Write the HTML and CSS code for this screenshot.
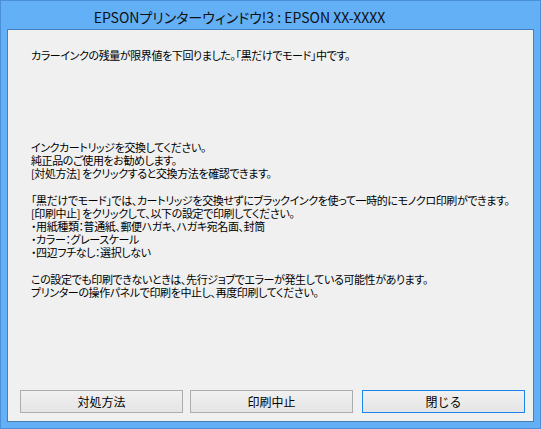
FILE: index.html
```html
<!DOCTYPE html>
<html lang="ja">
<head>
<meta charset="utf-8">
<title>EPSON</title>
<link rel="stylesheet" href="styles.css">
</head>
<body>
<div class="window">
  <div class="titlebar"><span class="title">EPSONプリンターウィンドウ!3 : EPSON XX-XXXX</span></div>
  <div class="client">
    <div class="message">
      <p class="lead">カラーインクの残量が限界値を下回りました。「黒だけでモード」中です。</p>
      <p class="block first">インクカートリッジを交換してください。<br>純正品のご使用をお勧めします。<br>[対処方法] をクリックすると交換方法を確認できます。</p>
      <p class="block">「黒だけでモード」では、カートリッジを交換せずにブラックインクを使って一時的にモノクロ印刷ができます。<br>[印刷中止] をクリックして、以下の設定で印刷してください。<br>・用紙種類：普通紙、郵便ハガキ、ハガキ宛名面、封筒<br>・カラー：グレースケール<br>・四辺フチなし：選択しない</p>
      <p class="block">この設定でも印刷できないときは、先行ジョブでエラーが発生している可能性があります。<br>プリンターの操作パネルで印刷を中止し、再度印刷してください。</p>
    </div>
    <div class="buttons">
      <button class="btn">対処方法</button>
      <button class="btn">印刷中止</button>
      <button class="btn focused">閉じる</button>
    </div>
  </div>
</div>
</body>
</html>
```
FILE: styles.css
```css
* { box-sizing: border-box; }
html, body { margin: 0; padding: 0; }
body {
  width: 541px;
  height: 429px;
  overflow: hidden;
  font-family: "Noto Sans CJK JP", "Noto Sans", sans-serif;
  color: #000;
}
.window {
  width: 541px;
  height: 429px;
  background: #63b0f7;
  border: 1px solid #4a8fd8;
  display: flex;
  flex-direction: column;
}
.titlebar {
  height: 28px;
  display: flex;
  align-items: center;
  justify-content: center;
  padding-right: 62px;
  padding-top: 4px;
}
.title {
  font-size: 14px;
  color: #111;
  font-feature-settings: "palt";
}
.client {
  margin: 0 6px 6px 6px;
  flex: 1;
  background: #f0f0f0;
  border: 1px solid #3f7fc0;
  border-right-color: #4a7fb4;
  border-bottom-color: #4a7fb4;
  display: flex;
  flex-direction: column;
}
.message {
  flex: 1;
  padding: 19px 0 0 23px;
  font-size: 11px;
  line-height: 13px;
  font-feature-settings: "palt";
  letter-spacing: -0.4px;
  white-space: nowrap;
}
.message p { margin: 0; }
.block { margin-top: 14px !important; }
.block.first { margin-top: 79px !important; }
.buttons {
  display: flex;
  gap: 7px;
  padding: 0 0 8px 12px;
}
.btn {
  width: 163px;
  height: 23px;
  border: 1px solid #adadad;
  background: linear-gradient(#f0f0f0, #e5e5e5);
  font-family: "Noto Sans CJK JP", sans-serif;
  font-size: 12px;
  line-height: 18px;
  padding: 0;
  color: #000;
}
.btn.focused {
  border-color: #1c84f0;
  margin-left: 2px;
}
```
